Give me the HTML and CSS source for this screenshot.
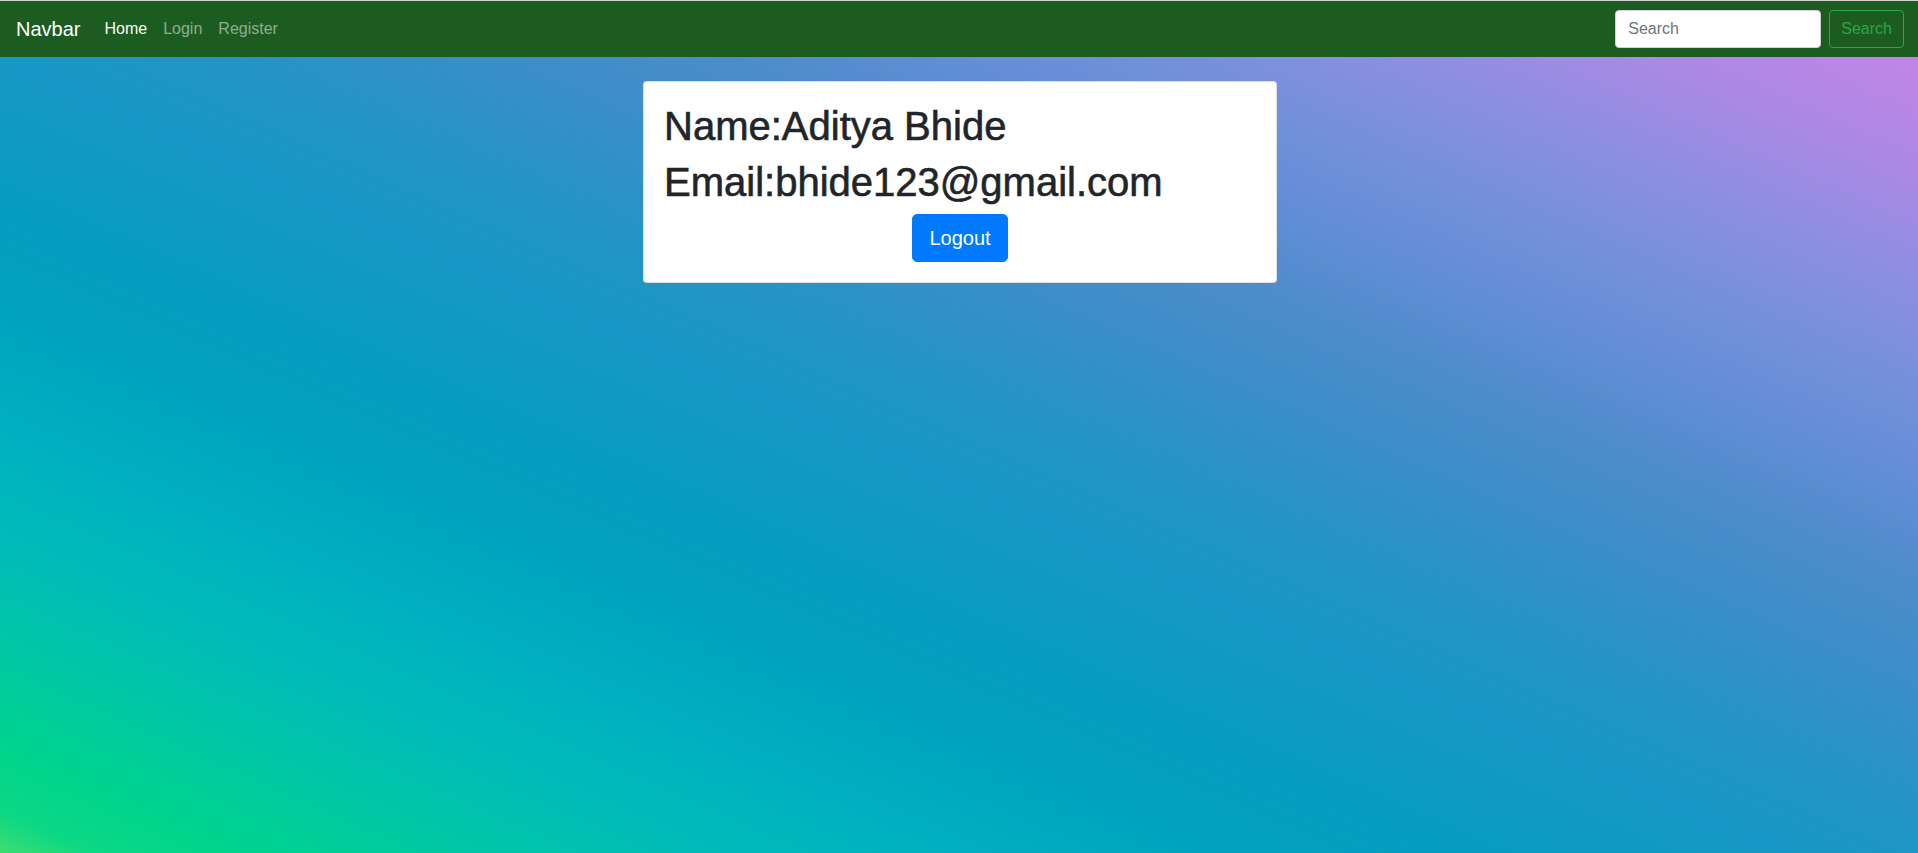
FILE: index.html
```html
<!DOCTYPE html>
<html lang="en">
<head>
<meta charset="utf-8">
<title>Profile</title>
<link rel="stylesheet" href="styles.css">
</head>
<body>
<nav class="navbar">
  <a class="brand" href="#">Navbar</a>
  <ul class="nav-links">
    <li><a class="nav-link active" href="#">Home</a></li>
    <li><a class="nav-link" href="#">Login</a></li>
    <li><a class="nav-link" href="#">Register</a></li>
  </ul>
  <form class="search-form">
    <input class="search-input" type="search" placeholder="Search">
    <button class="btn-outline" type="button">Search</button>
  </form>
</nav>
<main class="content">
  <div class="card">
    <div class="card-body">
      <h1 class="info">Name:Aditya Bhide</h1>
      <h1 class="info">Email:bhide123@gmail.com</h1>
      <div class="actions">
        <button class="btn-logout" type="button">Logout</button>
      </div>
    </div>
  </div>
</main>
</body>
</html>
```
FILE: styles.css
```css
* { box-sizing: border-box; }
html, body { margin: 0; padding: 0; }
body {
  min-height: 100vh;
  font-family: "Liberation Sans", Arial, sans-serif;
  font-size: 16px;
  line-height: 1.5;
  color: #212529;
  background: linear-gradient(to right top,
    #3ddc70 0%, #0cd884 2.5%, #00d48c 6%, #00c8a4 12%, #00bcb8 18%,
    #00b2c0 24%, #00a2bf 32%, #069cc0 38%, #1698c5 46%, #2294c6 52%,
    #3c8ec8 60%, #4e8ccc 66%, #648ed6 72%, #7890dc 78%, #908ee2 84%,
    #ac88e6 90%, #cc84e4 100%);
}
.navbar {
  display: flex;
  align-items: center;
  height: 57px;
  padding: 0 14px 0 16px;
  background: #1d5c20;
  border-top: 1px solid #cfd3cf;
}
.brand {
  font-size: 20px;
  line-height: 30px;
  color: #fff;
  text-decoration: none;
  margin-right: 16px;
}
.nav-links {
  display: flex;
  list-style: none;
  margin: 0;
  padding: 0;
  flex: 1;
}
.nav-link {
  display: block;
  padding: 8px;
  color: rgba(255, 255, 255, 0.5);
  text-decoration: none;
}
.nav-link.active { color: #fff; }
.search-form {
  display: flex;
  align-items: center;
  gap: 8px;
}
.search-input {
  width: 206px;
  height: 38px;
  padding: 6px 12px;
  font-family: inherit;
  font-size: 16px;
  color: #495057;
  background: #fff;
  border: 1px solid #ced4da;
  border-radius: 4px;
}
.search-input::placeholder { color: #6c757d; }
.btn-outline {
  height: 38px;
  padding: 6px 11px;
  font-family: inherit;
  font-size: 16px;
  color: #28a745;
  background: transparent;
  border: 1px solid #28a745;
  border-radius: 4px;
}
.content {
  padding: 24px 0 0 2px;
}
.card {
  width: 634px;
  margin: 0 auto;
  background: #fff;
  border: 1px solid rgba(0, 0, 0, 0.125);
  border-radius: 4px;
}
.card-body {
  padding: 20px;
}
.info {
  margin: 0 0 8px;
  font-size: 40px;
  font-weight: 400;
  line-height: 48px;
  color: #212529;
  -webkit-text-stroke: 0.6px #212529;
}
.actions {
  display: flex;
  justify-content: center;
}
.btn-logout {
  height: 48px;
  padding: 8px 16px;
  font-family: inherit;
  font-size: 20px;
  line-height: 30px;
  color: #fff;
  background: #007bff;
  border: 1px solid #007bff;
  border-radius: 5px;
}
```
